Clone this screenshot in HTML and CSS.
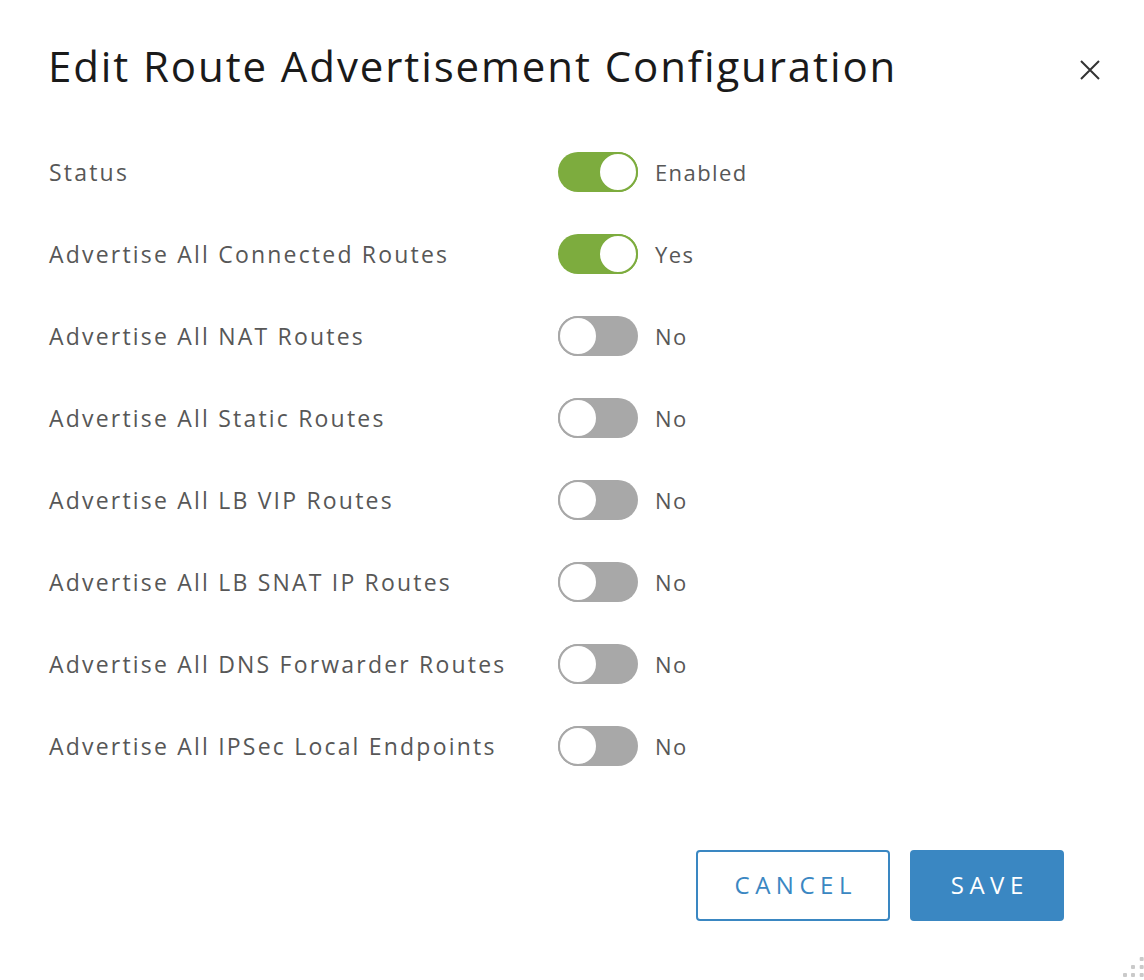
FILE: index.html
```html
<!DOCTYPE html>
<html>
<head>
<meta charset="utf-8">
<link rel="stylesheet" href="styles.css">
</head>
<body>
<div class="modal">
  <div class="header">
    <h1 class="title">Edit Route Advertisement Configuration</h1>
    <button class="close" aria-label="Close">
      <svg width="20" height="20" viewBox="0 0 20 20"><path d="M1 1 L19 19 M19 1 L1 19" stroke="#333" stroke-width="2" fill="none"/></svg>
    </button>
  </div>
  <div class="rows">
    <div class="row"><span class="label">Status</span><span class="toggle on"><span class="knob"></span></span><span class="value">Enabled</span></div>
    <div class="row"><span class="label">Advertise All Connected Routes</span><span class="toggle on"><span class="knob"></span></span><span class="value">Yes</span></div>
    <div class="row"><span class="label">Advertise All NAT Routes</span><span class="toggle"><span class="knob"></span></span><span class="value">No</span></div>
    <div class="row"><span class="label">Advertise All Static Routes</span><span class="toggle"><span class="knob"></span></span><span class="value">No</span></div>
    <div class="row"><span class="label">Advertise All LB VIP Routes</span><span class="toggle"><span class="knob"></span></span><span class="value">No</span></div>
    <div class="row"><span class="label">Advertise All LB SNAT IP Routes</span><span class="toggle"><span class="knob"></span></span><span class="value">No</span></div>
    <div class="row"><span class="label">Advertise All DNS Forwarder Routes</span><span class="toggle"><span class="knob"></span></span><span class="value">No</span></div>
    <div class="row"><span class="label">Advertise All IPSec Local Endpoints</span><span class="toggle"><span class="knob"></span></span><span class="value">No</span></div>
  </div>
  <div class="footer">
    <button class="btn btn-outline">CANCEL</button>
    <button class="btn btn-primary">SAVE</button>
  </div>
  <div class="grip">
    <svg width="24" height="24" viewBox="0 0 24 24">
      <rect x="19.7" y="1" width="4" height="4" rx="1" fill="#cacaca"/>
      <rect x="11" y="9" width="4" height="4" rx="1" fill="#cacaca"/>
      <rect x="19.7" y="9" width="4" height="4" rx="1" fill="#cacaca"/>
      <rect x="3" y="17" width="4" height="4" rx="1" fill="#cacaca"/>
      <rect x="11" y="17" width="4" height="4" rx="1" fill="#cacaca"/>
      <rect x="19.7" y="17" width="4" height="4" rx="1" fill="#cacaca"/>
    </svg>
  </div>
</div>
</body>
</html>
```

FILE: styles.css
```css
html, body {
  margin: 0;
  padding: 0;
  background: #fff;
}
body {
  font-family: "Open Sans", "Liberation Sans", sans-serif;
  width: 1144px;
  height: 980px;
  overflow: hidden;
}
.modal {
  position: relative;
  width: 1144px;
  height: 980px;
  box-sizing: border-box;
  padding: 0 80px 0 49px;
}
.header {
  display: flex;
  align-items: center;
  justify-content: space-between;
  padding-top: 38px;
  height: 56px;
}
.title {
  margin: 0 0 0 -1px;
  font-weight: 400;
  font-size: 42px;
  color: #1a1a1a;
  letter-spacing: 1.9px;
  line-height: 56px;
}
.close {
  border: 0;
  background: none;
  padding: 0;
  margin-right: -36px;
  margin-top: 8px;
  width: 20px;
  height: 20px;
  display: flex;
}
.rows {
  margin-top: 58px;
  display: flex;
  flex-direction: column;
  gap: 42px;
}
.row {
  display: flex;
  align-items: center;
  height: 40px;
}
.label {
  width: 509px;
  font-size: 23px;
  color: #575757;
  letter-spacing: 2.2px;
}
.toggle {
  position: relative;
  width: 80px;
  height: 40px;
  border-radius: 20px;
  background: #a8a8a8;
  box-sizing: border-box;
}
.toggle.on {
  background: #7dac3e;
}
.knob {
  position: absolute;
  top: 0;
  left: 0;
  width: 40px;
  height: 40px;
  border-radius: 50%;
  background: #fff;
  border: 2px solid #a8a8a8;
  box-sizing: border-box;
}
.toggle.on .knob {
  left: 40px;
  border-color: #7dac3e;
}
.value {
  margin-left: 17px;
  font-size: 22px;
  color: #575757;
  letter-spacing: 1.4px;
}
.footer {
  position: absolute;
  right: 80px;
  top: 850px;
  display: flex;
  gap: 20px;
}
.btn {
  height: 71px;
  border-radius: 4px;
  font-family: "Open Sans", "Liberation Sans", sans-serif;
  font-size: 24px;
  letter-spacing: 5.5px;
  padding: 0 0 2px 5.5px;
  box-sizing: border-box;
  cursor: pointer;
}
.btn-outline {
  width: 194px;
  background: #fff;
  border: 2px solid #3a87c2;
  color: #3a87c2;
}
.btn-primary {
  width: 154px;
  background: #3a87c2;
  border: 2px solid #3a87c2;
  color: #fff;
}
.grip {
  position: absolute;
  right: 0;
  bottom: 0;
  width: 24px;
  height: 24px;
}
.grip svg {
  display: block;
}
```
